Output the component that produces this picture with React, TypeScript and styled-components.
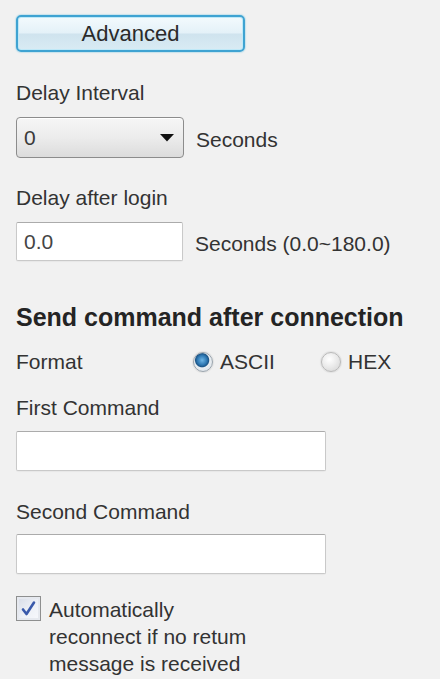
import React from "react";
import styled, { createGlobalStyle } from "styled-components";

const Global = createGlobalStyle`
  html, body {
    margin: 0;
    padding: 0;
    background: #f1f1f1;
  }
  body {
    font-family: "Liberation Sans", Arial, sans-serif;
    color: #333;
  }
`;

const Panel = styled.div`
  width: 440px;
  height: 679px;
  box-sizing: border-box;
  padding: 15px 0 0 16px;
  display: flex;
  flex-direction: column;
  align-items: flex-start;
  background: #f1f1f1;
  overflow: hidden;
`;

const AdvancedButton = styled.button`
  width: 229px;
  height: 37px;
  box-sizing: border-box;
  border: 2px solid #3fa3d2;
  border-radius: 5px;
  background: linear-gradient(#f3fafd 0%, #e4f1f8 48%, #cfe3ee 52%, #d9ebf4 100%);
  box-shadow: inset 0 0 0 1px #bfe9f8, 0 0 1px 1px rgba(120, 200, 230, 0.35);
  font-family: "Liberation Sans", Arial, sans-serif;
  font-size: 22px;
  color: #2a2a2a;
  padding: 0;
  line-height: 1;
  cursor: pointer;
`;

const Label = styled.div<{ $top: number }>`
  margin-top: ${(p) => p.$top}px;
  font-size: 21px;
  line-height: 24px;
  white-space: nowrap;
`;

const Row = styled.div<{ $top: number }>`
  margin-top: ${(p) => p.$top}px;
  display: flex;
  align-items: center;
  gap: 12px;
`;

const Select = styled.div`
  width: 168px;
  height: 41px;
  box-sizing: border-box;
  border: 1px solid #8c8c8c;
  border-radius: 4px;
  background: linear-gradient(#f6f6f6 0%, #ececec 50%, #dcdcdc 100%);
  box-shadow: inset 0 1px 0 #fff;
  display: flex;
  align-items: center;
  justify-content: space-between;
  padding: 0 9px 0 7px;
  font-size: 21px;
  color: #3a3a3a;
`;

const Unit = styled.span`
  font-size: 21px;
  line-height: 24px;
  padding-top: 4px;
  white-space: nowrap;
`;

const TextBox = styled.input<{ $w: number; $h: number }>`
  width: ${(p) => p.$w}px;
  height: ${(p) => p.$h}px;
  box-sizing: border-box;
  margin: 0;
  border: 1px solid #c9c9c9;
  border-top-color: #ababab;
  border-radius: 2px;
  background: #fff;
  padding: 0 7px;
  font-family: "Liberation Sans", Arial, sans-serif;
  font-size: 21px;
  color: #444;
  outline: none;
  box-shadow: 0 1px 1px rgba(0, 0, 0, 0.04);
`;

const Heading = styled.div`
  margin-top: 42px;
  font-size: 25px;
  line-height: 28px;
  font-weight: bold;
  color: #242424;
  white-space: nowrap;
`;

const FormatRow = styled.div`
  margin-top: 19px;
  display: flex;
  align-items: center;
  font-size: 21px;
  line-height: 24px;
`;

const FormatLabel = styled.span`
  width: 177px;
`;

const RadioOption = styled.label<{ $w?: number }>`
  display: flex;
  align-items: center;
  gap: 7px;
  width: ${(p) => (p.$w ? `${p.$w}px` : "auto")};
`;

const RadioDot = styled.span<{ $on?: boolean }>`
  width: 20px;
  height: 20px;
  box-sizing: border-box;
  border-radius: 50%;
  border: 1px solid ${(p) => (p.$on ? "#9aa4ad" : "#b9b9b9")};
  background: ${(p) =>
    p.$on
      ? "radial-gradient(circle at 45% 40%, #6fb6e6 0%, #2f79b4 32%, #1d5688 45%, #e9eef2 52%, #d6dde3 100%)"
      : "radial-gradient(circle at 40% 35%, #ffffff 0%, #ececec 45%, #d2d2d2 100%)"};
  box-shadow: 0 0 1px 1px rgba(0, 0, 0, 0.06);
`;

const CheckRow = styled.div`
  margin-top: 22px;
  display: flex;
  align-items: flex-start;
  gap: 8px;
`;

const CheckBox = styled.span`
  width: 25px;
  height: 25px;
  box-sizing: border-box;
  border: 1px solid #8e8f8f;
  background: linear-gradient(135deg, #d6dbe6 0%, #eef1f7 55%, #f8f9fc 100%);
  box-shadow: inset 0 0 0 2px #e6e9ef;
  display: flex;
  align-items: center;
  justify-content: center;
  flex-shrink: 0;
`;

const CheckText = styled.div`
  font-size: 21px;
  line-height: 27px;
  width: 200px;
`;

export default function App() {
  return (
    <>
      <Global />
      <Panel>
        <AdvancedButton type="button">Advanced</AdvancedButton>

        <Label $top={29}>Delay Interval</Label>
        <Row $top={12}>
          <Select>
            <span>0</span>
            <svg width="14" height="8" viewBox="0 0 14 8">
              <path d="M0 0 H14 L7 7.5 Z" fill="#111" />
            </svg>
          </Select>
          <Unit>Seconds</Unit>
        </Row>

        <Label $top={28}>Delay after login</Label>
        <Row $top={12}>
          <TextBox $w={167} $h={39} readOnly value="0.0" />
          <Unit>Seconds (0.0~180.0)</Unit>
        </Row>

        <Heading>Send command after connection</Heading>

        <FormatRow>
          <FormatLabel>Format</FormatLabel>
          <RadioOption $w={128}>
            <RadioDot $on />
            ASCII
          </RadioOption>
          <RadioOption>
            <RadioDot />
            HEX
          </RadioOption>
        </FormatRow>

        <Label $top={22}>First Command</Label>
        <Row $top={11}>
          <TextBox $w={310} $h={40} readOnly value="" />
        </Row>

        <Label $top={29}>Second Command</Label>
        <Row $top={10}>
          <TextBox $w={310} $h={40} readOnly value="" />
        </Row>

        <CheckRow>
          <CheckBox>
            <svg width="17" height="17" viewBox="0 0 17 17">
              <path
                d="M3 9.5 L6.5 14 L14 2.5"
                fill="none"
                stroke="#3a5aab"
                strokeWidth="2.6"
                strokeLinecap="round"
                strokeLinejoin="round"
              />
            </svg>
          </CheckBox>
          <CheckText>
            Automatically reconnect if no retum message is received
          </CheckText>
        </CheckRow>
      </Panel>
    </>
  );
}
